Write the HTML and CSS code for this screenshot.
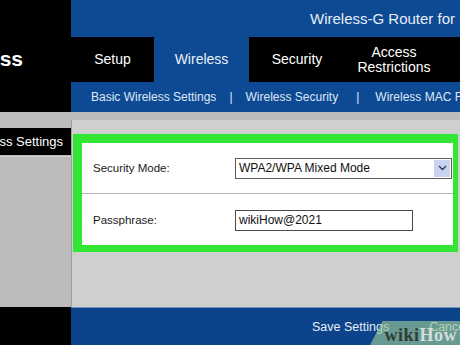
FILE: index.html
```html
<!DOCTYPE html>
<html>
<head>
<meta charset="utf-8">
<link rel="stylesheet" href="styles.css">
</head>
<body>
<div class="page">
  <div class="top">
    <div class="brand"><span>Wireless</span></div>
    <div class="topright">
      <div class="header"><span>Wireless-G Router for</span></div>
      <nav class="tabs">
        <div class="tab tab-setup">Setup</div>
        <div class="tab tab-wireless active">Wireless</div>
        <div class="tab tab-security">Security</div>
        <div class="tab tab-access">Access<br>Restrictions</div>
      </nav>
      <nav class="subnav">
        <span>Basic Wireless Settings</span>
        <span class="sep">|</span>
        <span>Wireless Security</span>
        <span class="sep sep-wide">|</span>
        <span>Wireless MAC Filter</span>
      </nav>
    </div>
  </div>
  <div class="main">
    <aside class="side">
      <div class="side-item"><span>Wireless Settings</span></div>
      <div class="side-line"></div>
    </aside>
    <section class="content">
      <div class="panel">
        <div class="row row-first">
          <div class="label">Security Mode:</div>
          <div class="select">
            <span class="select-text">WPA2/WPA Mixed Mode</span>
            <span class="select-btn">
              <svg width="9" height="6" viewBox="0 0 9 6"><path d="M1 1 L4.5 4.5 L8 1" fill="none" stroke="#2c3550" stroke-width="1.3"/></svg>
            </span>
          </div>
        </div>
        <div class="row">
          <div class="label">Passphrase:</div>
          <div class="input">wikiHow@2021</div>
        </div>
      </div>
    </section>
  </div>
  <div class="bottom">
    <div class="bottom-left"></div>
    <div class="bottom-right">
      <span>Save Settings</span>
      <span>Cancel Changes</span>
    </div>
  </div>
  <div class="wm"><span class="wm-wiki">wiki</span><span class="wm-how">How</span></div>
</div>
</body>
</html>
```
FILE: styles.css
```css
* { box-sizing: border-box; }
html, body { margin: 0; padding: 0; }
body {
  width: 460px;
  height: 345px;
  overflow: hidden;
  font-family: "Liberation Sans", Arial, sans-serif;
  background: #bdbdbd;
}
.page {
  position: relative;
  width: 460px;
  height: 345px;
  overflow: hidden;
  display: flex;
  flex-direction: column;
}
.top {
  display: grid;
  grid-template-columns: 71px 1fr;
  height: 112px;
}
.brand {
  background: #000;
  color: #fff;
  display: flex;
  align-items: center;
  justify-content: flex-end;
  padding-right: 48px;
  overflow: hidden;
  font-size: 21px;
  font-weight: bold;
  white-space: nowrap;
  padding-top: 5px;
}
.topright {
  display: flex;
  flex-direction: column;
  min-width: 0;
}
.header {
  height: 37px;
  background: #0e4a94;
  color: #e6edf7;
  font-size: 15px;
  padding-left: 239px;
  display: flex;
  align-items: center;
  white-space: nowrap;
  overflow: hidden;
}
.tabs {
  height: 45px;
  background: #000;
  display: flex;
}
.tab {
  color: #fff;
  font-size: 14px;
  display: flex;
  align-items: center;
  justify-content: center;
  text-align: center;
  line-height: 15px;
}
.tab-setup { width: 83px; }
.tab-wireless { width: 95px; }
.tab-security { width: 96px; }
.tab-access { width: 98px; padding-top: 1px; }
.tab.active { background: #0e4a94; color: #eaf0f8; }
.subnav {
  height: 30px;
  background: #0e4a94;
  color: #dfe8f5;
  font-size: 12px;
  display: flex;
  align-items: center;
  gap: 13px;
  padding-left: 20px;
  white-space: nowrap;
  overflow: hidden;
}
.subnav .sep-wide { margin-left: 5px; margin-right: 3px; }
.main {
  flex: 1;
  display: grid;
  grid-template-columns: 71px 1fr;
  background: #bcbcbc;
}
.side {
  padding-top: 16px;
}
.side-item {
  height: 27px;
  background: #000;
  color: #fff;
  font-size: 13px;
  display: flex;
  align-items: center;
  justify-content: flex-end;
  padding-right: 8px;
  overflow: hidden;
  white-space: nowrap;
}
.side-line {
  height: 1px;
  background: #cfcfcf;
  margin-top: 1px;
}
.content {
  margin-top: 8px;
  background: #cfcfcf;
  border-left: 1px solid #9e9e9e;
  padding: 14px 0 0 1px;
}
.panel {
  width: 385px;
  height: 118px;
  background: #fff;
  border-style: solid;
  border-color: #33e633;
  border-width: 9px 5px 7px 9px;
}
.row {
  height: 51px;
  display: grid;
  grid-template-columns: 153px 1fr;
  align-items: center;
  padding-top: 1px;
}
.row-first {
  height: 51px;
  border-bottom: 1px solid #b4b4b4;
  padding-top: 0;
}
.label {
  padding-left: 11px;
  font-size: 11.5px;
  color: #1a1a1a;
}
.select {
  width: 217px;
  height: 21px;
  border: 1px solid #5c5c5c;
  display: flex;
  align-items: center;
  justify-content: space-between;
  padding: 0 1px 0 3px;
  background: #fff;
}
.select-text, .input {
  font-size: 12px;
  color: #111;
}
.select-btn {
  width: 16px;
  height: 17px;
  background: #c9d3ef;
  display: flex;
  align-items: center;
  justify-content: center;
}
.input {
  width: 178px;
  height: 21px;
  border: 1px solid #4a4a4a;
  display: flex;
  align-items: center;
  padding-left: 3px;
}
.bottom {
  height: 38px;
  display: grid;
  grid-template-columns: 71px 1fr;
}
.bottom-left { background: #000; }
.bottom-right {
  background: #0c438b;
  color: #e8eef7;
  font-size: 12.5px;
  display: flex;
  align-items: center;
  gap: 40px;
  padding-left: 241px;
  white-space: nowrap;
  overflow: hidden;
  border-top: 1px solid #6d8fbc;
}
.wm {
  position: absolute;
  right: 0;
  bottom: 0;
  width: 90px;
  height: 24px;
  background: rgba(150, 195, 150, 0.68);
  clip-path: polygon(14% 0, 100% 0, 100% 100%, 0 100%);
  font-family: "Liberation Serif", "DejaVu Serif", serif;
  font-weight: bold;
  font-size: 18px;
  display: flex;
  align-items: flex-end;
  justify-content: flex-end;
  padding-right: 3px;
  line-height: 19px;
  letter-spacing: 0.5px;
}
.wm-wiki { color: #2f3d37; }
.wm-how { color: #d3ded8; }
```
